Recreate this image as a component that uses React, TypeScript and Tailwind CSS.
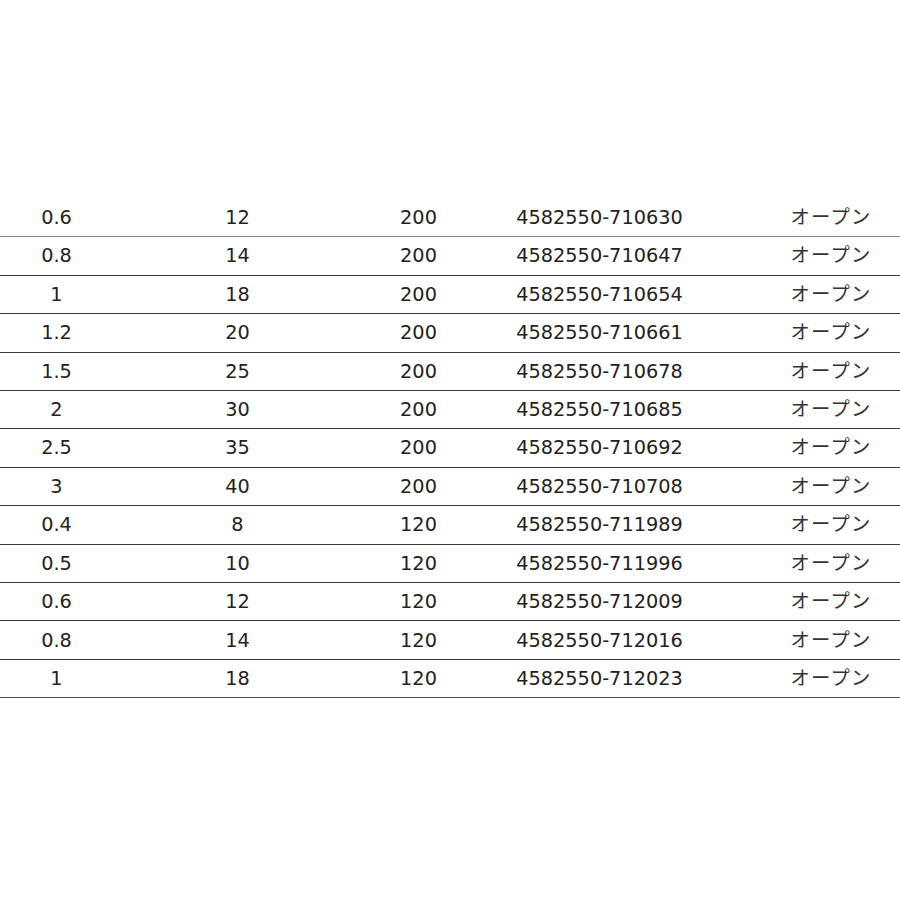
import React from "react";

const rows: [string, string, string, string][] = [
  ["0.6", "12", "200", "4582550-710630"],
  ["0.8", "14", "200", "4582550-710647"],
  ["1", "18", "200", "4582550-710654"],
  ["1.2", "20", "200", "4582550-710661"],
  ["1.5", "25", "200", "4582550-710678"],
  ["2", "30", "200", "4582550-710685"],
  ["2.5", "35", "200", "4582550-710692"],
  ["3", "40", "200", "4582550-710708"],
  ["0.4", "8", "120", "4582550-711989"],
  ["0.5", "10", "120", "4582550-711996"],
  ["0.6", "12", "120", "4582550-712009"],
  ["0.8", "14", "120", "4582550-712016"],
  ["1", "18", "120", "4582550-712023"],
];

export default function App() {
  return (
    <div className="w-[900px] h-[900px] overflow-hidden bg-white">
      <div
        className="mt-[199px] ml-[-34px] w-[1006px] text-[19.3px] text-[#222]"
        style={{ fontFamily: '"DejaVu Sans", "Noto Sans CJK JP", sans-serif' }}
      >
        {rows.map((r, i) => (
          <div
            key={i}
            className={
              "flex items-center h-[38.42px] border-b " +
              (i === 0 ? "border-[#8a8a8a]" : i === rows.length - 1 ? "border-[#555]" : "border-[#3a3a3a]")
            }
          >
            <div className="w-[181px] text-center leading-none">{r[0]}</div>
            <div className="w-[181px] text-center leading-none">{r[1]}</div>
            <div className="w-[181px] text-center leading-none">{r[2]}</div>
            <div className="w-[181px] text-center leading-none">{r[3]}</div>
            <div className="w-[282px] text-center leading-none tracking-[1.2px] text-[#333]">オープン</div>
          </div>
        ))}
      </div>
    </div>
  );
}
